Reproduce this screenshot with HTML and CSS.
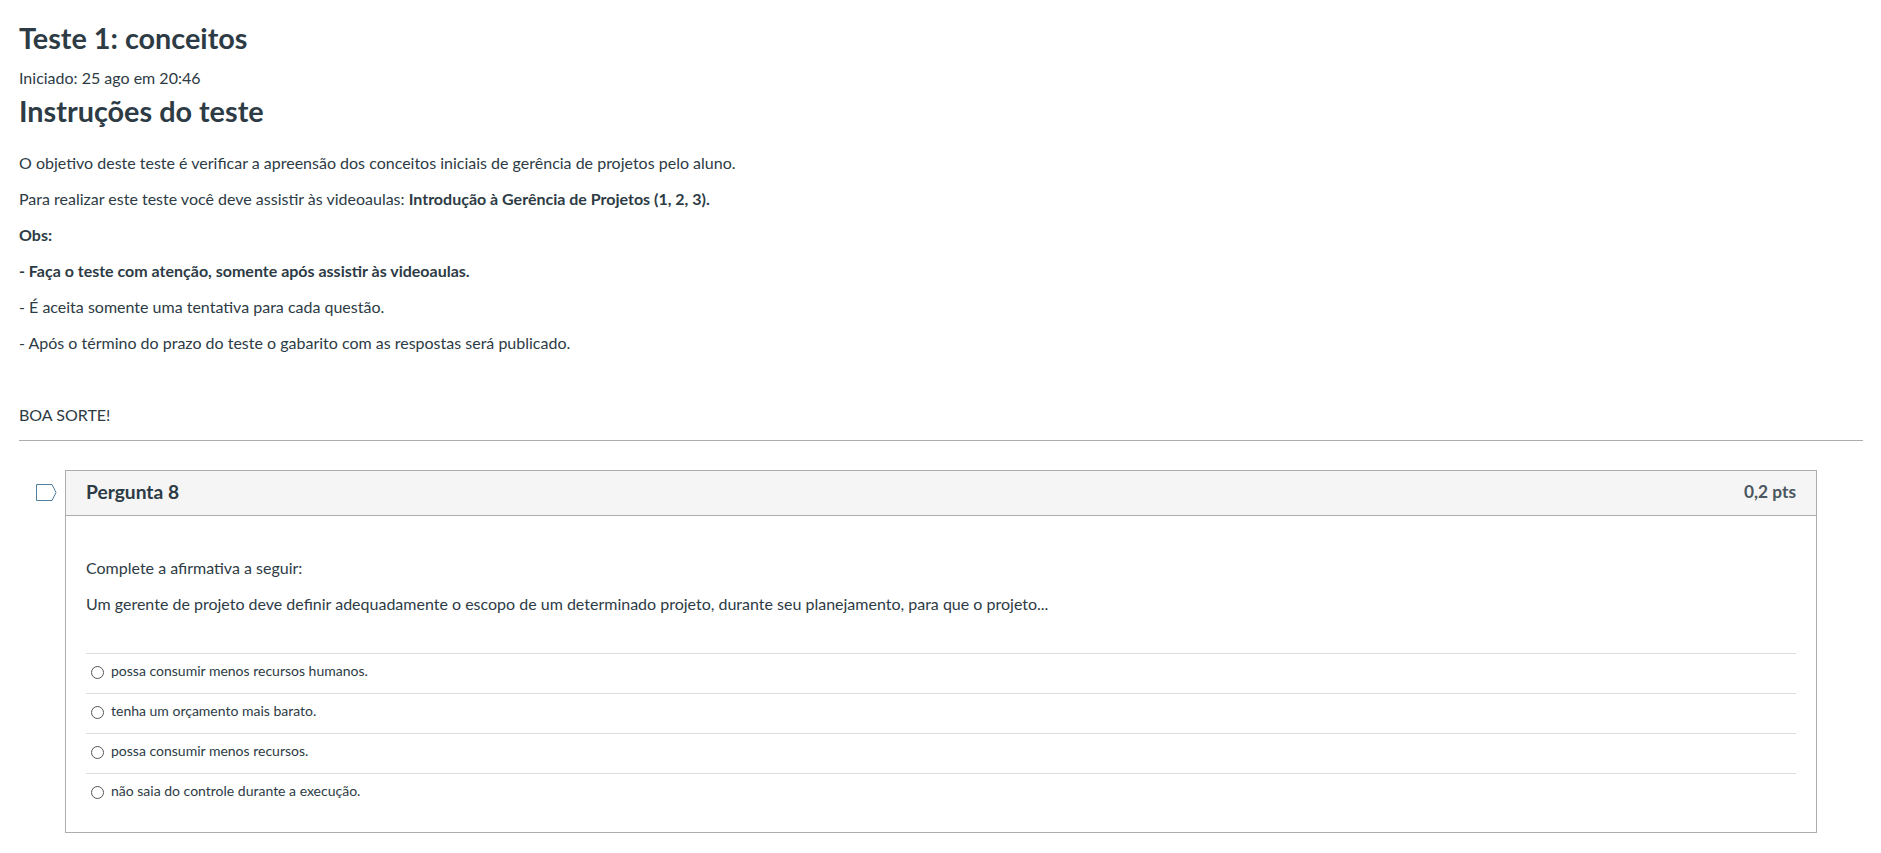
FILE: index.html
```html
<!DOCTYPE html>
<html lang="pt">
<head>
<meta charset="utf-8">
<title>Teste 1: conceitos</title>
<link rel="stylesheet" href="styles.css">
</head>
<body>
<main class="page">
  <h1 class="title">Teste 1: conceitos</h1>
  <div class="started">Iniciado: 25 ago em 20:46</div>
  <h2 class="subtitle">Instruções do teste</h2>
  <section class="instructions">
    <p>O objetivo deste teste é verificar a apreensão dos conceitos iniciais de gerência de projetos pelo aluno.</p>
    <p>Para realizar este teste você deve assistir às videoaulas: <strong>Introdução à Gerência de Projetos (1, 2, 3).</strong></p>
    <p><strong>Obs:</strong></p>
    <p><strong>- Faça o teste com atenção, somente após assistir às videoaulas.</strong></p>
    <p>- É aceita somente uma tentativa para cada questão.</p>
    <p>- Após o término do prazo do teste o gabarito com as respostas será publicado.</p>
    <p>&nbsp;</p>
    <p>BOA SORTE!</p>
  </section>
  <hr class="rule">
  <div class="question-row">
    <svg class="flag" width="21" height="17" viewBox="0 0 21 17" aria-hidden="true"><path d="M.5.5h15.5l4 8-4 8H.5z" fill="none" stroke="#4f7f9f" stroke-width="1"/></svg>
    <article class="question">
      <header class="q-head">
        <span class="q-name">Pergunta 8</span>
        <span class="q-pts">0,2 pts</span>
      </header>
      <div class="q-body">
        <div class="q-text">
          <p>Complete a afirmativa a seguir:</p>
          <p>Um gerente de projeto deve definir adequadamente o escopo de um determinado projeto, durante seu planejamento, para que o projeto...</p>
        </div>
        <ul class="answers">
          <li class="answer"><span class="radio"></span>possa consumir menos recursos humanos.</li>
          <li class="answer"><span class="radio"></span>tenha um orçamento mais barato.</li>
          <li class="answer"><span class="radio"></span>possa consumir menos recursos.</li>
          <li class="answer"><span class="radio"></span>não saia do controle durante a execução.</li>
        </ul>
      </div>
    </article>
  </div>
</main>
</body>
</html>
```
FILE: styles.css
```css
* { box-sizing: border-box; }
html, body { margin: 0; background: #fff; }
body {
  font-family: Lato, "Liberation Sans", sans-serif;
  color: #2d3b45;
  font-size: 16px;
  line-height: 21px;
  height: 853px;
  overflow: hidden;
}
.page { padding: 20px 18px 0 19px; }
.title {
  margin: 0;
  font-size: 28.8px;
  line-height: 36px;
  font-weight: 700;
}
.started { margin-top: 11px; line-height: 21px; }
.subtitle {
  margin: 0;
  margin-top: 7px;
  font-size: 28.8px;
  line-height: 32px;
  font-weight: 700;
}
.instructions { margin-top: 25px; }
.instructions p { margin: 0 0 15px; }
.instructions strong { font-weight: 700; }
.rule {
  margin: 0;
  border: 0;
  border-top: 1px solid #adadad;
  height: 1px;
}
.question-row { display: flex; align-items: flex-start; margin-top: 29px; padding-left: 17px; padding-right: 46px; }
.flag { flex: none; margin-top: 14px; margin-right: 8px; }
.question {
  flex: 1;
  border: 1px solid #adadad;
  height: 363px;
}
.q-head {
  display: flex;
  justify-content: space-between;
  align-items: center;
  height: 45px;
  padding: 0 20px 3px;
  background: #f5f5f5;
  border-bottom: 1px solid #adadad;
}
.q-name { font-size: 19.2px; font-weight: 700; }
.q-pts { font-size: 17.3px; font-weight: 700; color: #4a5660; }
.q-body { padding: 0 20px; }
.q-text { padding-top: 41px; }
.q-text p { margin: 0 0 15px; }
.answers { list-style: none; margin: 0; padding: 0; margin-top: 39px; }
.answer {
  display: flex;
  align-items: center;
  height: 40px;
  border-top: 1px solid #ddd;
  padding-left: 5px;
  padding-bottom: 6px;
  font-size: 14px;
}
.radio {
  width: 13px;
  height: 13px;
  margin-top: 4px;
  margin-right: 7px;
  border: 1px solid #555;
  border-radius: 50%;
  flex: none;
}
```
